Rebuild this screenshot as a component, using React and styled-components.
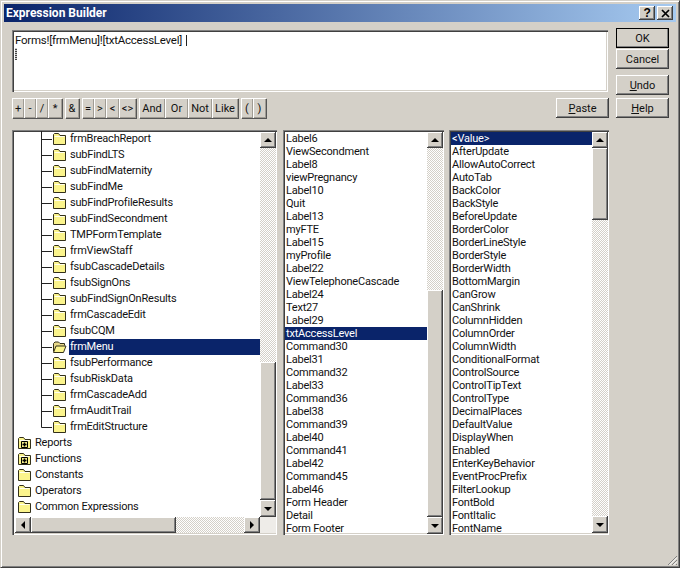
import React from 'react'
import styled, { createGlobalStyle } from 'styled-components'

const uiFont = `Roboto, "DejaVu Sans Condensed", sans-serif`

const GlobalStyle = createGlobalStyle`
  html, body {
    margin: 0;
    padding: 0;
    background: #d4d0c8;
  }
  * {
    box-sizing: border-box;
  }
`

const controlNames = [
  'Label6', 'ViewSecondment', 'Label8', 'viewPregnancy', 'Label10', 'Quit', 'Label13', 'myFTE',
  'Label15', 'myProfile', 'Label22', 'ViewTelephoneCascade', 'Label24', 'Text27', 'Label29',
  'txtAccessLevel', 'Command30', 'Label31', 'Command32', 'Label33', 'Command36', 'Label38',
  'Command39', 'Label40', 'Command41', 'Label42', 'Command45', 'Label46', 'Form Header', 'Detail',
  'Form Footer',
]

const propertyNames = [
  '<Value>', 'AfterUpdate', 'AllowAutoCorrect', 'AutoTab', 'BackColor', 'BackStyle', 'BeforeUpdate',
  'BorderColor', 'BorderLineStyle', 'BorderStyle', 'BorderWidth', 'BottomMargin', 'CanGrow',
  'CanShrink', 'ColumnHidden', 'ColumnOrder', 'ColumnWidth', 'ConditionalFormat', 'ControlSource',
  'ControlTipText', 'ControlType', 'DecimalPlaces', 'DefaultValue', 'DisplayWhen', 'Enabled',
  'EnterKeyBehavior', 'EventProcPrefix', 'FilterLookup', 'FontBold', 'FontItalic', 'FontName',
]

const formNames = [
  'frmBreachReport', 'subFindLTS', 'subFindMaternity', 'subFindMe', 'subFindProfileResults',
  'subFindSecondment', 'TMPFormTemplate', 'frmViewStaff', 'fsubCascadeDetails', 'fsubSignOns',
  'subFindSignOnResults', 'frmCascadeEdit', 'fsubCQM', 'frmMenu', 'fsubPerformance', 'fsubRiskData',
  'frmCascadeAdd', 'frmAuditTrail', 'frmEditStructure',
]

const rootNodes = [
  { name: 'Reports', plus: true },
  { name: 'Functions', plus: true },
  { name: 'Constants' },
  { name: 'Operators' },
  { name: 'Common Expressions' },
]

const operatorGroups = [
  [['+', 12], ['-', 12], ['/', 12], ['*', 14]],
  [['&', 14]],
  [['=', 12], ['>', 12], ['<', 13], ['<>', 17]],
  [['And', 26], ['Or', 23], ['Not', 24], ['Like', 26]],
  [['(', 12], [')', 13]],
]

function Folder({ open, plus }) {
  return (
    <svg width="15" height="14" viewBox="0 0 15 14">
      {open ? (
        <>
          <path d="M1.500 11.500V3.500L3 2h3.500L8 3.500h4.500v2" fill="#e8d98a" stroke="#33301a" />
          <path d="M1.500 12.500L4 6h10l-2.500 6.500z" fill="#fbf48c" stroke="#33301a" />
        </>
      ) : (
        <>
          <path d="M1.500 12.500V2.500L2.500 1.500h4L8 3.500h5.500v9z" fill="#fbf48c" stroke="#33301a" strokeLinejoin="round" />
          <path d="M2.500 4.500h10" stroke="#fffff0" />
          {plus && <path d="M4.500 5.500h6v6h-6z" fill="#fbf48c" stroke="#000" />}
          {plus && <path d="M7.500 6.500v4M5.500 8.500h4" stroke="#000" strokeWidth="1.500" />}
        </>
      )}
    </svg>
  )
}

function Connector({ last }) {
  return (
    <ConnectorBox width="11" height="16" viewBox="0 0 11 16">
      <path d={last ? 'M.5 0v8.500H11' : 'M.5 0v16M.5 8.500H11'} stroke="#222" fill="none" />
    </ConnectorBox>
  )
}

function Arrow({ dir }) {
  const points = {
    up: '0,5 4,1 8,5',
    down: '0,1 8,1 4,5',
    left: '5,0 5,8 1,4',
    right: '1,0 1,8 5,4',
  }
  const flat = dir === 'up' || dir === 'down'
  return (
    <svg width={flat ? 8 : 6} height={flat ? 6 : 8}>
      <polygon points={points[dir]} fill="#000" />
    </svg>
  )
}

function VScrollbar({ before, thumb }) {
  return (
    <VBar>
      <ScrollBtn $h={16}><Arrow dir="up" /></ScrollBtn>
      <Track style={{ flexBasis: before }} />
      <Thumb style={{ flexBasis: thumb }} />
      <Track style={{ flexGrow: 1 }} />
      <ScrollBtn $h={17}><Arrow dir="down" /></ScrollBtn>
    </VBar>
  )
}

function ItemList({ items, selected, width, before, thumb }) {
  return (
    <ListBox $w={width}>
      <Items>
        {items.map((item) => (
          <Item key={item} $selected={item === selected}>{item}</Item>
        ))}
      </Items>
      <VScrollbar before={before} thumb={thumb} />
    </ListBox>
  )
}

export default function App() {
  return (
    <>
      <GlobalStyle />
      <Dialog>
        <TitleBar>
          <TitleText>Expression Builder</TitleText>
          <TitleBtn $mr={2}>?</TitleBtn>
          <TitleBtn>
            <svg width="9" height="9" viewBox="0 0 9 9">
              <path d="M1 1l7 7M8 1l-7 7" stroke="#000" strokeWidth="1.700" />
            </svg>
          </TitleBtn>
        </TitleBar>

        <Content>
          <TopRow>
            <EditorColumn>
              <Editor>
                <EditorLine>
                  Forms![frmMenu]![txtAccessLevel]
                  <Caret />
                </EditorLine>
                <DottedCaret />
              </Editor>
              <OperatorRow>
                {operatorGroups.map((group, i) => (
                  <OpGroup key={i}>
                    {group.map(([label, width]) => (
                      <OpButton key={label} $w={width}>{label}</OpButton>
                    ))}
                  </OpGroup>
                ))}
                <PasteButton><u>P</u>aste</PasteButton>
              </OperatorRow>
            </EditorColumn>
            <ButtonColumn>
              <DialogButton $default>OK</DialogButton>
              <DialogButton $mt={1}>Cancel</DialogButton>
              <DialogButton $mt={6}><u>U</u>ndo</DialogButton>
              <DialogButton $mt={3}><u>H</u>elp</DialogButton>
            </ButtonColumn>
          </TopRow>

          <ListsRow>
            <TreeBox>
              <TreeMain>
                <TreeRows>
                  {formNames.map((name, i) => (
                    <ChildRow key={name}>
                      <Connector last={i === formNames.length - 1} />
                      <Folder open={name === 'frmMenu'} />
                      <ChildLabel $selected={name === 'frmMenu'}>{name}</ChildLabel>
                    </ChildRow>
                  ))}
                  {rootNodes.map((node) => (
                    <RootRow key={node.name}>
                      <Folder plus={node.plus} />
                      <RootLabel>{node.name}</RootLabel>
                    </RootRow>
                  ))}
                </TreeRows>
                <VScrollbar before={214} thumb={138} />
              </TreeMain>
              <HBarRow>
                <HBar>
                  <ScrollBtn $w={16}><Arrow dir="left" /></ScrollBtn>
                  <HThumb />
                  <HTrack />
                  <ScrollBtn $w={16}><Arrow dir="right" /></ScrollBtn>
                </HBar>
                <Corner />
              </HBarRow>
            </TreeBox>

            <ItemList items={controlNames} selected="txtAccessLevel" width={161} before={142} thumb={227} />
            <ItemList items={propertyNames} selected="<Value>" width={160} before={0} thumb={72} />
          </ListsRow>
        </Content>

        <Grip width="11" height="11" viewBox="0 0 11 11">
          <path d="M10 1L1 10M10 5L5 10M10 9l-1 1" stroke="#808080" fill="none" />
          <path d="M10 2.500L2.500 10M10 6.500L6.500 10" stroke="#fff" fill="none" />
        </Grip>
      </Dialog>
    </>
  )
}

const Dialog = styled.div`
  position: relative;
  width: 680px;
  height: 568px;
  padding: 3px;
  background: #d4d0c8;
  font-family: ${uiFont};
  font-size: 11px;
  letter-spacing: -0.2px;
  color: #111;
  border: 1px solid;
  border-color: #d4d0c8 #404040 #404040 #d4d0c8;
  box-shadow: inset 1px 1px 0 #fff, inset -1px -1px 0 #808080;
`

const TitleBar = styled.div`
  height: 18px;
  display: flex;
  align-items: center;
  padding: 0 3px 0 2px;
  background: linear-gradient(90deg, #0a246a, #a6caf0);
`

const TitleText = styled.div`
  flex: 1;
  color: #fff;
  font-weight: bold;
  font-size: 12px;
  letter-spacing: 0;
`

const raised = `
  background: #d4d0c8;
  box-shadow: inset -1px -1px 0 #404040, inset 1px 1px 0 #fff, inset -2px -2px 0 #808080;
`

const TitleBtn = styled.div`
  ${raised}
  width: 16px;
  height: 14px;
  margin-right: ${(p) => p.$mr || 0}px;
  display: flex;
  align-items: center;
  justify-content: center;
  font: bold 12px "Liberation Sans", sans-serif;
  color: #000;
`

const Content = styled.div`
  padding: 6px 0 0 8px;
  display: flex;
  flex-direction: column;
  gap: 12px;
`

const TopRow = styled.div`
  display: flex;
  gap: 7px;
`

const EditorColumn = styled.div`
  width: 597px;
  padding-top: 2px;
  display: flex;
  flex-direction: column;
  gap: 6px;
`

const sunken = `
  background: #fff;
  box-shadow: inset 1px 1px 0 #808080, inset 2px 2px 0 #404040, inset -1px -1px 0 #fff, inset -2px -2px 0 #d4d0c8;
`

const Editor = styled.div`
  ${sunken}
  width: 596px;
  height: 62px;
  padding: 3px 3px;
`

const EditorLine = styled.div`
  display: flex;
  align-items: center;
  height: 14px;
  font-size: 11.5px;
  letter-spacing: -0.25px;
`

const Caret = styled.span`
  width: 1px;
  height: 11px;
  margin-left: 4px;
  background: #222;
`

const DottedCaret = styled.div`
  width: 2px;
  height: 12px;
  margin-top: 1px;
  background: repeating-linear-gradient(0deg, #444 0 1px, #ccc 1px 2px);
`

const OperatorRow = styled.div`
  display: flex;
  height: 20px;
  gap: 2px;
  letter-spacing: 0;
`

const OpGroup = styled.div`
  display: flex;
  margin-right: 1px;
  box-shadow: 1px 1px 0 #555;
`

const OpButton = styled.div`
  width: ${(p) => p.$w}px;
  height: 20px;
  display: flex;
  align-items: center;
  justify-content: center;
  background: #d4d0c8;
  box-shadow: inset 1px 1px 0 #fff, inset -1px -1px 0 #a09c94;
`

const ButtonColumn = styled.div`
  display: flex;
  flex-direction: column;
  letter-spacing: 0;
`

const DialogButton = styled.div`
  ${raised}
  width: 53px;
  height: 20px;
  margin-top: ${(p) => p.$mt || 0}px;
  display: flex;
  align-items: center;
  justify-content: center;
  ${(p) => p.$default && `
    outline: 1px solid #000;
    outline-offset: -1px;
  `}
`

const PasteButton = styled(DialogButton)`
  margin-left: auto;
`

const ListsRow = styled.div`
  display: flex;
  gap: 6px;
  height: 405px;
`

const TreeBox = styled.div`
  ${sunken}
  width: 265px;
  padding: 2px 1px 2px 2px;
  display: flex;
  flex-direction: column;
`

const TreeMain = styled.div`
  flex: 1;
  min-height: 0;
  display: flex;
`

const TreeRows = styled.div`
  flex: 1;
  min-width: 0;
  margin-top: -1px;
  overflow: hidden;
`

const ChildRow = styled.div`
  height: 16px;
  display: flex;
  align-items: center;
  padding-left: 27px;
`

const ConnectorBox = styled.svg`
  flex: none;
`

const ChildLabel = styled.div`
  flex: 1;
  height: 16px;
  line-height: 15px;
  margin-left: 2px;
  padding-left: 1px;
  background: ${(p) => (p.$selected ? '#0a246a' : 'transparent')};
  color: ${(p) => (p.$selected ? '#fff' : 'inherit')};
`

const RootRow = styled.div`
  height: 16px;
  display: flex;
  align-items: center;
  padding-left: 3px;
`

const RootLabel = styled.div`
  height: 16px;
  line-height: 15px;
  margin-left: 3px;
`

const HBarRow = styled.div`
  display: flex;
  height: 16px;
  padding-left: 1px;
`

const HBar = styled.div`
  flex: 1;
  display: flex;
`

const Corner = styled.div`
  width: 16px;
  background: #eeece8;
`

const ScrollBtn = styled.div`
  ${raised}
  flex: none;
  width: ${(p) => p.$w || 16}px;
  height: ${(p) => p.$h || 16}px;
  display: flex;
  align-items: center;
  justify-content: center;
`

const hatch = `repeating-conic-gradient(#d4d0c8 0 25%, #fff 0 50%) 0 0 / 2px 2px`

const HThumb = styled.div`
  ${raised}
  width: 145px;
`

const HTrack = styled.div`
  flex: 1;
  background: ${hatch};
`

const VBar = styled.div`
  width: 16px;
  flex: none;
  display: flex;
  flex-direction: column;
  padding-bottom: 2px;
`

const Track = styled.div`
  flex: 0 0 auto;
  background: ${hatch};
`

const Thumb = styled.div`
  ${raised}
  flex: 0 0 auto;
`

const ListBox = styled.div`
  ${sunken}
  width: ${(p) => p.$w}px;
  padding: 2px 1px 0 2px;
  display: flex;
  &:nth-child(2) {
    margin-right: -1px;
  }
`

const Items = styled.div`
  flex: 1;
  min-width: 0;
`

const Item = styled.div`
  height: 13px;
  line-height: 13px;
  padding-left: 1px;
  white-space: nowrap;
  background: ${(p) => (p.$selected ? '#0a246a' : 'transparent')};
  color: ${(p) => (p.$selected ? '#fff' : 'inherit')};
`

const Grip = styled.svg`
  position: absolute;
  right: 1px;
  bottom: 1px;
`
